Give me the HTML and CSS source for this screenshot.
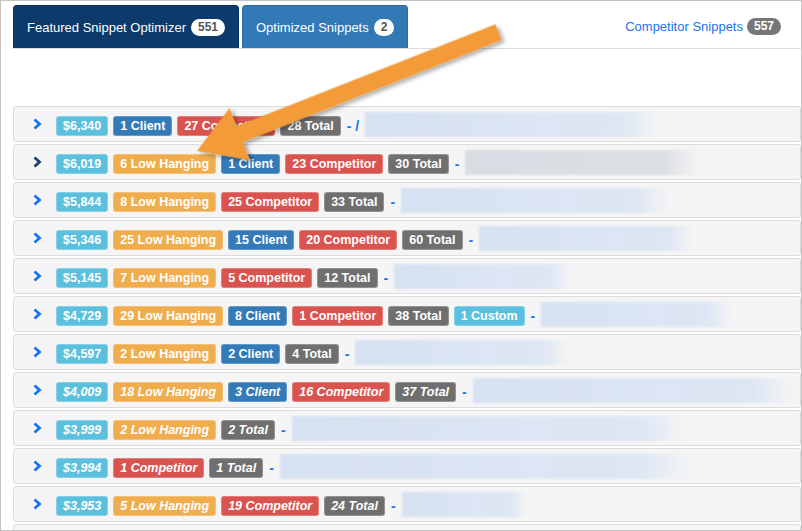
FILE: index.html
```html
<!DOCTYPE html>
<html lang="en">
<head>
  <meta charset="UTF-8" />
  <title>Featured Snippet Optimizer</title>
  <link rel="stylesheet" href="styles.css">
</head>
<body>
<div class="frame">
  <!-- ===== Tabs ===== -->
  <nav class="tabs">
    <a class="tab tab-active">Featured Snippet Optimizer <span class="pill">551</span></a>
    <a class="tab tab-alt">Optimized Snippets <span class="pill">2</span></a>
    <a class="tab-link">Competitor Snippets <span class="pill pill-gray">557</span></a>
  </nav>

  <!-- ===== Snippet rows ===== -->
  <div class="rows">
    <div class="row">
      <svg class="chev" viewBox="0 0 10 12"><polyline points="2.5,1.5 7.5,6 2.5,10.5"/></svg>
      <span class="lbl info">$6,340</span>
      <span class="lbl primary">1 Client</span>
      <span class="lbl danger">27 Competitor</span>
      <span class="lbl gray">28 Total</span>
      <span class="dash">- /</span>
      <span class="blur" style="width:292px"></span>
    </div>
    <div class="row hover">
      <svg class="chev" viewBox="0 0 10 12"><polyline points="2.5,1.5 7.5,6 2.5,10.5"/></svg>
      <span class="lbl info">$6,019</span>
      <span class="lbl warning">6 Low Hanging</span>
      <span class="lbl primary">1 Client</span>
      <span class="lbl danger">23 Competitor</span>
      <span class="lbl gray">30 Total</span>
      <span class="dash">-</span>
      <span class="blur" style="width:235px"></span>
    </div>
    <div class="row">
      <svg class="chev" viewBox="0 0 10 12"><polyline points="2.5,1.5 7.5,6 2.5,10.5"/></svg>
      <span class="lbl info">$5,844</span>
      <span class="lbl warning">8 Low Hanging</span>
      <span class="lbl danger">25 Competitor</span>
      <span class="lbl gray">33 Total</span>
      <span class="dash">-</span>
      <span class="blur" style="width:268px"></span>
    </div>
    <div class="row">
      <svg class="chev" viewBox="0 0 10 12"><polyline points="2.5,1.5 7.5,6 2.5,10.5"/></svg>
      <span class="lbl info">$5,346</span>
      <span class="lbl warning">25 Low Hanging</span>
      <span class="lbl primary">15 Client</span>
      <span class="lbl danger">20 Competitor</span>
      <span class="lbl gray">60 Total</span>
      <span class="dash">-</span>
      <span class="blur" style="width:215px"></span>
    </div>
    <div class="row">
      <svg class="chev" viewBox="0 0 10 12"><polyline points="2.5,1.5 7.5,6 2.5,10.5"/></svg>
      <span class="lbl info">$5,145</span>
      <span class="lbl warning">7 Low Hanging</span>
      <span class="lbl danger">5 Competitor</span>
      <span class="lbl gray">12 Total</span>
      <span class="dash">-</span>
      <span class="blur" style="width:177px"></span>
    </div>
    <div class="row">
      <svg class="chev" viewBox="0 0 10 12"><polyline points="2.5,1.5 7.5,6 2.5,10.5"/></svg>
      <span class="lbl info">$4,729</span>
      <span class="lbl warning">29 Low Hanging</span>
      <span class="lbl primary">8 Client</span>
      <span class="lbl danger">1 Competitor</span>
      <span class="lbl gray">38 Total</span>
      <span class="lbl info">1 Custom</span>
      <span class="dash">-</span>
      <span class="blur" style="width:190px"></span>
    </div>
    <div class="row">
      <svg class="chev" viewBox="0 0 10 12"><polyline points="2.5,1.5 7.5,6 2.5,10.5"/></svg>
      <span class="lbl info">$4,597</span>
      <span class="lbl warning">2 Low Hanging</span>
      <span class="lbl primary">2 Client</span>
      <span class="lbl gray">4 Total</span>
      <span class="dash">-</span>
      <span class="blur" style="width:214px"></span>
    </div>
    <div class="row italic">
      <svg class="chev" viewBox="0 0 10 12"><polyline points="2.5,1.5 7.5,6 2.5,10.5"/></svg>
      <span class="lbl info">$4,009</span>
      <span class="lbl warning">18 Low Hanging</span>
      <span class="lbl primary">3 Client</span>
      <span class="lbl danger">16 Competitor</span>
      <span class="lbl gray">37 Total</span>
      <span class="dash">-</span>
      <span class="blur" style="width:319px"></span>
    </div>
    <div class="row italic">
      <svg class="chev" viewBox="0 0 10 12"><polyline points="2.5,1.5 7.5,6 2.5,10.5"/></svg>
      <span class="lbl info">$3,999</span>
      <span class="lbl warning">2 Low Hanging</span>
      <span class="lbl gray">2 Total</span>
      <span class="dash">-</span>
      <span class="blur" style="width:395px"></span>
    </div>
    <div class="row italic">
      <svg class="chev" viewBox="0 0 10 12"><polyline points="2.5,1.5 7.5,6 2.5,10.5"/></svg>
      <span class="lbl info">$3,994</span>
      <span class="lbl danger">1 Competitor</span>
      <span class="lbl gray">1 Total</span>
      <span class="dash">-</span>
      <span class="blur" style="width:410px"></span>
    </div>
    <div class="row italic">
      <svg class="chev" viewBox="0 0 10 12"><polyline points="2.5,1.5 7.5,6 2.5,10.5"/></svg>
      <span class="lbl info">$3,953</span>
      <span class="lbl warning">5 Low Hanging</span>
      <span class="lbl danger">19 Competitor</span>
      <span class="lbl gray">24 Total</span>
      <span class="dash">-</span>
      <span class="blur" style="width:124px"></span>
    </div>
    <div class="row"></div>
  </div>

  <!-- ===== Callout arrow (annotation over the page) ===== -->
  <svg class="callout" viewBox="0 0 802 531">
    <defs>
      <filter id="shadow" x="-20%" y="-40%" width="140%" height="180%">
        <feDropShadow dx="2" dy="3" stdDeviation="2" flood-color="#000" flood-opacity="0.35"/>
      </filter>
    </defs>
    <g transform="translate(196 150) rotate(-21.5)" filter="url(#shadow)">
      <polygon points="0,0 46,-28 46,-8.5 324,-8.5 324,8.5 46,8.5 46,28" fill="#f29b37"/>
    </g>
  </svg>
</div>
</body>
</html>
```

FILE: styles.css
```css
:root {
  --info: #5bc0de;
  --primary: #337ab7;
  --navy: #0c3a6a;
  --warning: #f0ad4e;
  --danger: #d9534f;
  --gray: #6f6f6f;
  --link: #1a73e8;
  --line: #dcdcdc;
  --row-bg: #f5f5f5;
}

/* ===== Reset ===== */
*, *::before, *::after { box-sizing: border-box; }
body {
  margin: 0;
  font-family: "Liberation Sans", Arial, sans-serif;
  background: #fff;
  color: #333;
}

/* ===== Frame ===== */
.frame {
  position: relative;
  width: 802px;
  height: 531px;
  border: 1px solid #c4c4c4;
  overflow: hidden;
}

/* ===== Tabs ===== */
.tabs {
  display: flex;
  align-items: flex-end;
  gap: 3px;
  margin: 4px 0 0 12px;
  border-bottom: 1px solid var(--line);
  height: 44px;
}
.tab {
  display: flex;
  align-items: center;
  gap: 5px;
  height: 43px;
  padding: 0 13px;
  color: #fff;
  font-size: 13px;
  border-radius: 4px 4px 0 0;
  border: 1px solid transparent;
  border-bottom: none;
}
.tab-active { background: var(--navy); border-color: #0a3360; }
.tab-alt { background: #3279b6; border-color: #2b6ba4; }
.tab-link {
  display: flex;
  align-items: center;
  gap: 4px;
  height: 43px;
  margin-left: auto;
  margin-right: 20px;
  color: var(--link);
  font-size: 13px;
}
.pill {
  display: inline-block;
  background: #fff;
  color: #555;
  font-size: 12px;
  font-weight: bold;
  line-height: 17px;
  padding: 0 7px;
  border-radius: 9px;
}
.pill-gray { background: #777; color: #fff; }

/* ===== Rows ===== */
.rows { margin: 57px 0 0 12px; }
.row {
  display: flex;
  align-items: center;
  gap: 5px;
  height: 36px;
  margin-bottom: 2px;
  padding: 3px 0 0 18px;
  background: var(--row-bg);
  border: 1px solid var(--line);
  border-radius: 3px;
}
.chev {
  width: 10px;
  height: 12px;
  margin-right: 9px;
  margin-top: -4px;
  fill: none;
  stroke: #1574f0;
  stroke-width: 2.8;
}
.hover .chev { stroke: #1d3f66; }

.lbl {
  display: inline-block;
  color: #fff;
  font-size: 12.5px;
  font-weight: bold;
  line-height: 18px;
  padding: 0 6px;
  border-radius: 3px;
  white-space: nowrap;
  border: 1px solid rgba(255,255,255,.25);
}
.info { background: var(--info); }
.primary { background: var(--primary); }
.warning { background: var(--warning); }
.danger { background: var(--danger); }
.gray { background: var(--gray); }
.italic .lbl { font-style: italic; }

.dash {
  color: var(--link);
  font-size: 14px;
  font-weight: bold;
  margin: 0 1px 0 1px;
}
.blur {
  display: inline-block;
  height: 25px;
  margin-top: -3px;
  background: linear-gradient(90deg, #d6e1f1 0%, #dce6f4 60%, #dde6f3 88%, rgba(221,230,243,0) 100%);
  filter: blur(1px);
}
.hover .blur {
  background: linear-gradient(90deg, #d9dde3 0%, #dcdfe3 85%, rgba(220,223,227,0) 100%);
}

/* ===== Annotation ===== */
.callout {
  position: absolute;
  top: 0;
  left: 0;
  width: 802px;
  height: 531px;
  pointer-events: none;
}
```
